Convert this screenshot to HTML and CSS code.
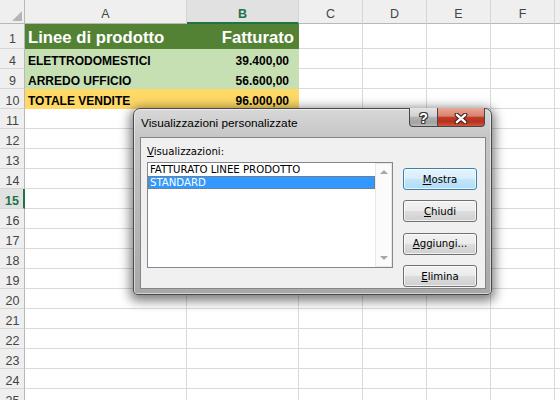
FILE: index.html
```html
<!DOCTYPE html>
<html lang="it">
<head>
<meta charset="utf-8">
<title>Visualizzazioni personalizzate</title>
<link rel="stylesheet" href="styles.css">
</head>
<body>
<div class="sheet">
  <div class="corner"><span class="tri"></span></div>
  <div class="ch">A</div><div class="ch sel">B</div><div class="ch">C</div><div class="ch">D</div><div class="ch">E</div><div class="ch">F</div><div class="ch"></div>

  <div class="rh">1</div><div class="c hdr">Linee di prodotto</div><div class="c hdr num">Fatturato</div><div class="c"></div><div class="c"></div><div class="c"></div><div class="c"></div><div class="c"></div>
  <div class="rh">4</div><div class="c lg">ELETTRODOMESTICI</div><div class="c lg num">39.400,00</div><div class="c"></div><div class="c"></div><div class="c"></div><div class="c"></div><div class="c"></div>
  <div class="rh">9</div><div class="c lg">ARREDO UFFICIO</div><div class="c lg num">56.600,00</div><div class="c"></div><div class="c"></div><div class="c"></div><div class="c"></div><div class="c"></div>
  <div class="rh">10</div><div class="c gold">TOTALE VENDITE</div><div class="c gold num">96.000,00</div><div class="c"></div><div class="c"></div><div class="c"></div><div class="c"></div><div class="c"></div>
  <div class="rh">11</div><div class="c"></div><div class="c"></div><div class="c"></div><div class="c"></div><div class="c"></div><div class="c"></div><div class="c"></div>
  <div class="rh">12</div><div class="c"></div><div class="c"></div><div class="c"></div><div class="c"></div><div class="c"></div><div class="c"></div><div class="c"></div>
  <div class="rh">13</div><div class="c"></div><div class="c"></div><div class="c"></div><div class="c"></div><div class="c"></div><div class="c"></div><div class="c"></div>
  <div class="rh">14</div><div class="c"></div><div class="c"></div><div class="c"></div><div class="c"></div><div class="c"></div><div class="c"></div><div class="c"></div>
  <div class="rh sel">15</div><div class="c"></div><div class="c"></div><div class="c"></div><div class="c"></div><div class="c"></div><div class="c"></div><div class="c"></div>
  <div class="rh">16</div><div class="c"></div><div class="c"></div><div class="c"></div><div class="c"></div><div class="c"></div><div class="c"></div><div class="c"></div>
  <div class="rh">17</div><div class="c"></div><div class="c"></div><div class="c"></div><div class="c"></div><div class="c"></div><div class="c"></div><div class="c"></div>
  <div class="rh">18</div><div class="c"></div><div class="c"></div><div class="c"></div><div class="c"></div><div class="c"></div><div class="c"></div><div class="c"></div>
  <div class="rh">19</div><div class="c"></div><div class="c"></div><div class="c"></div><div class="c"></div><div class="c"></div><div class="c"></div><div class="c"></div>
  <div class="rh">20</div><div class="c"></div><div class="c"></div><div class="c"></div><div class="c"></div><div class="c"></div><div class="c"></div><div class="c"></div>
  <div class="rh">21</div><div class="c"></div><div class="c"></div><div class="c"></div><div class="c"></div><div class="c"></div><div class="c"></div><div class="c"></div>
  <div class="rh">22</div><div class="c"></div><div class="c"></div><div class="c"></div><div class="c"></div><div class="c"></div><div class="c"></div><div class="c"></div>
  <div class="rh">23</div><div class="c"></div><div class="c"></div><div class="c"></div><div class="c"></div><div class="c"></div><div class="c"></div><div class="c"></div>
  <div class="rh">24</div><div class="c"></div><div class="c"></div><div class="c"></div><div class="c"></div><div class="c"></div><div class="c"></div><div class="c"></div>
  <div class="rh">25</div><div class="c"></div><div class="c"></div><div class="c"></div><div class="c"></div><div class="c"></div><div class="c"></div><div class="c"></div>
</div>

<div class="dialog">
  <div class="titlebar">
    <span class="title">Visualizzazioni personalizzate</span>
    <div class="capbtns">
      <span class="cb help">?</span>
      <span class="cb close">
        <svg width="14" height="11" viewBox="0 0 14 11">
          <path d="M2.8 1.8 L11.2 9.2 M11.2 1.8 L2.8 9.2" stroke="#3a1c16" stroke-width="4.4" stroke-linecap="round" fill="none"/>
          <path d="M2.8 1.8 L11.2 9.2 M11.2 1.8 L2.8 9.2" stroke="#ffffff" stroke-width="2.4" stroke-linecap="round" fill="none"/>
        </svg>
      </span>
    </div>
  </div>
  <div class="client">
    <div class="left">
      <div class="label"><u>V</u>isualizzazioni:</div>
      <div class="listbox">
        <div class="items">
          <div class="item">FATTURATO LINEE PRODOTTO</div>
          <div class="item selected">STANDARD</div>
        </div>
        <div class="scrollbar">
          <span class="abox"><span class="arrow up"></span></span>
          <span class="abox"><span class="arrow down"></span></span>
        </div>
      </div>
    </div>
    <div class="buttons">
      <div class="btn def"><span><u>M</u>ostra</span></div>
      <div class="btn"><span><u>C</u>hiudi</span></div>
      <div class="btn"><span><u>A</u>ggiungi...</span></div>
      <div class="btn"><span><u>E</u>limina</span></div>
    </div>
  </div>
</div>
</body>
</html>
```

FILE: styles.css
```css
* { box-sizing: border-box; }
html, body { margin: 0; padding: 0; }
body {
  width: 560px;
  height: 400px;
  overflow: hidden;
  position: relative;
  background: #ffffff;
  font-family: "Liberation Sans", Arial, sans-serif;
}

/* ---------- spreadsheet ---------- */
.sheet {
  display: grid;
  grid-template-columns: 25px 162px 112px 64px 64px 64px 64px 64px;
  grid-template-rows: 24px 25px repeat(18, 20px);
  width: 619px;
}
.corner {
  background: #efefef;
  border-right: 1px solid #b8b8b8;
  border-bottom: 1px solid #b8b8b8;
  display: flex;
  justify-content: flex-end;
  align-items: flex-end;
  padding: 0 2px 2px 0;
}
.tri {
  width: 0;
  height: 0;
  border-left: 10px solid transparent;
  border-bottom: 10px solid #b5b5b5;
}
.ch, .rh {
  background: #efefef;
  color: #444444;
  font-size: 12.5px;
  line-height: 14px;
  display: flex;
  justify-content: center;
  align-items: center;
  padding-top: 5px;
}
.ch {
  border-right: 1px solid #d5d5d5;
  border-bottom: 1px solid #b8b8b8;
}
.ch.sel {
  background: #e1e1e1;
  color: #217346;
  font-weight: bold;
  border-bottom: 2px solid #217346;
}
.rh {
  border-right: 1px solid #b8b8b8;
  border-bottom: 1px solid #d5d5d5;
  padding-left: 1px;
}
.rh.sel {
  background: #e1e1e1;
  color: #217346;
  font-weight: bold;
  border-right: 2px solid #217346;
}
.c {
  border-right: 1px solid #dadada;
  border-bottom: 1px solid #dadada;
  display: flex;
  align-items: flex-end;
  font-weight: bold;
  font-size: 12px;
  line-height: 14px;
  padding: 0 3px;
  white-space: nowrap;
  overflow: hidden;
  color: #000;
}
.num { justify-content: flex-end; padding-right: 9px; }
.hdr {
  background: #548235;
  border-color: #548235;
  color: #ffffff;
  font-size: 16.7px;
  line-height: 20px;
  padding-bottom: 0.5px;
}
.hdr.num { padding-right: 4px; }
.lg { background: #c6e0b4; border-color: #c6e0b4; }
.gold { background: #ffd966; border-color: #ffd966; }

/* ---------- dialog ---------- */
.dialog {
  position: absolute;
  left: 133px;
  top: 108px;
  width: 359px;
  height: 187px;
  border: 1px solid #4a4a4a;
  border-radius: 7px 7px 4px 4px;
  background: linear-gradient(#d8d8d8 0, #c6c6c6 28px, #b6b6b6 60%, #a8a8a8 100%);
  box-shadow: inset 0 0 0 1px rgba(255,255,255,0.5), 0 3px 11px 3px rgba(0,0,0,0.5);
  padding: 0 5px 5px 6px;
  display: flex;
  flex-direction: column;
}
.titlebar {
  height: 28px;
  flex: none;
  display: flex;
  align-items: flex-start;
}
.title {
  flex: 1;
  margin: 6.5px 0 0 1px;
  font-size: 11.8px;
  line-height: 14px;
  color: #000;
  white-space: nowrap;
}
.capbtns {
  display: flex;
  height: 19px;
  margin: -1px 1px 0 0;
}
.cb {
  height: 19px;
  border: 1px solid #474747;
  border-top: none;
  display: flex;
  align-items: center;
  justify-content: center;
}
.help {
  width: 28px;
  border-right: none;
  border-radius: 0 0 0 4px;
  background: linear-gradient(#e4e4e4 0%, #d2d2d2 45%, #b2b2b2 52%, #a2a2a2 80%, #b9b9b9 100%);
  color: #ffffff;
  font-weight: bold;
  font-size: 14px;
  line-height: 14px;
  padding-top: 2px;
  text-shadow: 1px 0 #3b3b3b, -1px 0 #3b3b3b, 0 1px #3b3b3b, 0 -1px #3b3b3b,
               1px 1px #3b3b3b, -1px -1px #3b3b3b, 1px -1px #3b3b3b, -1px 1px #3b3b3b;
}
.close {
  width: 48px;
  border-radius: 0 0 4px 0;
  background: linear-gradient(#e9a899 0%, #d8826f 45%, #c33c27 52%, #b5321e 75%, #d3553a 100%);
  padding-top: 2px;
}
.close svg { display: block; }

.client {
  flex: 1;
  background: #f0f0f0;
  border: 1px solid #858585;
  display: flex;
  padding: 7px 8px 0 6px;
  font-family: "DejaVu Sans Condensed", "DejaVu Sans", sans-serif;
  font-stretch: semi-condensed;
  font-size: 11.3px;
  color: #000;
}
.left {
  width: 246px;
  flex: none;
  display: flex;
  flex-direction: column;
}
.label {
  line-height: 14px;
  margin-bottom: 3px;
  white-space: nowrap;
}
.listbox {
  height: 106px;
  border: 1px solid #828790;
  background: #ffffff;
  display: flex;
}
.items { flex: 1; }
.item {
  height: 13px;
  line-height: 12px;
  padding: 1px 0 0 2px;
  white-space: nowrap;
}
.item.selected {
  background: #3399ff;
  color: #ffffff;
  outline: 1px dotted #a06a30;
  outline-offset: -1px;
}
.scrollbar {
  width: 17px;
  flex: none;
  border: 1px solid #e8e8e8;
  background: #fbfbfb;
  display: flex;
  flex-direction: column;
  justify-content: space-between;
}
.abox {
  height: 16px;
  display: flex;
  align-items: center;
  justify-content: center;
}
.arrow { width: 0; height: 0; }
.arrow.up {
  border-left: 4px solid transparent;
  border-right: 4px solid transparent;
  border-bottom: 4px solid #a6a6a6;
}
.arrow.down {
  border-left: 4px solid transparent;
  border-right: 4px solid transparent;
  border-top: 4px solid #a6a6a6;
}
.buttons {
  margin-left: 10px;
  padding-top: 23px;
  display: flex;
  flex-direction: column;
  gap: 10.33px;
}
.btn {
  width: 74px;
  height: 22px;
  border: 1px solid #707070;
  border-radius: 3px;
  background: linear-gradient(#f2f2f2 0%, #ebebeb 48%, #dddddd 52%, #cfcfcf 100%);
  box-shadow: inset 0 0 0 1px rgba(255,255,255,0.7);
  display: flex;
  align-items: center;
  justify-content: center;
  line-height: 14px;
  padding-top: 1.5px;
  white-space: nowrap;
}
.btn.def {
  border-color: #3c7fb1;
  background: linear-gradient(#e5f4fc 0%, #d6eefc 48%, #c4e5f9 52%, #b1dbf6 100%);
}
```
